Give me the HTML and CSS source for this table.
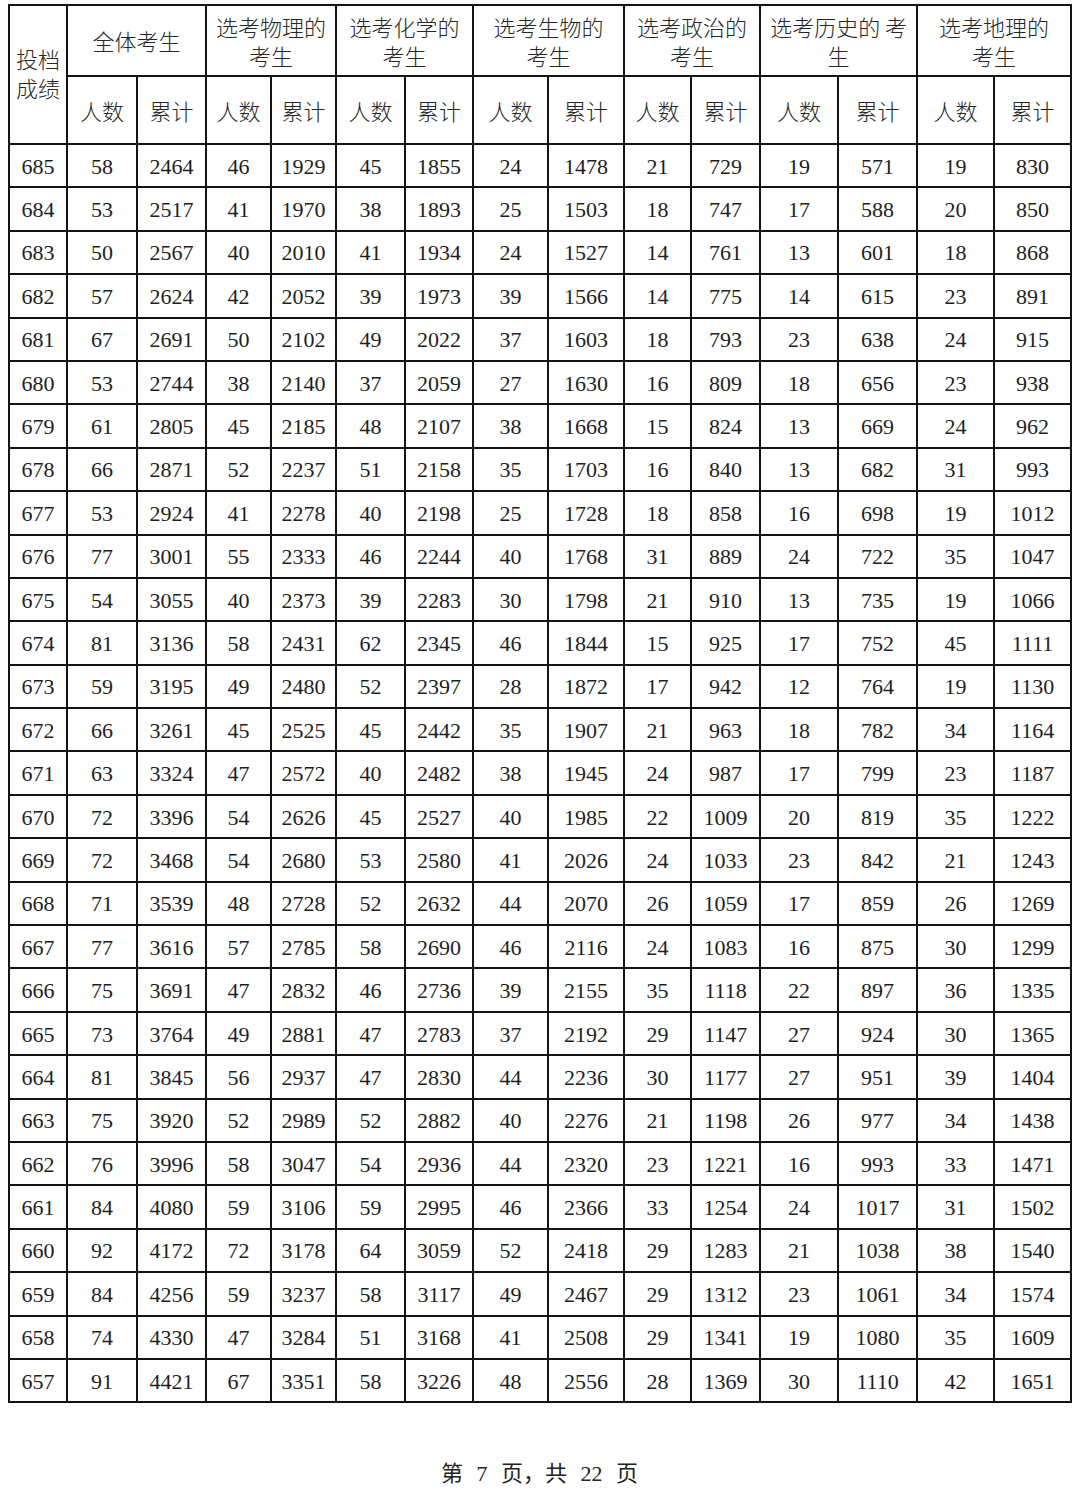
FILE: index.html
```html
<!DOCTYPE html>
<html lang="zh">
<head>
<meta charset="utf-8">
<link rel="stylesheet" href="styles.css">
</head>
<body>
<table class="grid">
<colgroup>
<col style="width:58px"><col style="width:70px"><col style="width:69px"><col style="width:65px"><col style="width:65px"><col style="width:69px"><col style="width:68px"><col style="width:75px"><col style="width:76px"><col style="width:67px"><col style="width:69px"><col style="width:78px"><col style="width:79px"><col style="width:77px"><col style="width:77px">
</colgroup>
<thead>
<tr class="h1">
<th rowspan="2" class="score">投档<br>成绩</th>
<th colspan="2">全体考生</th>
<th colspan="2">选考物理的<br>考生</th>
<th colspan="2">选考化学的<br>考生</th>
<th colspan="2">选考生物的<br>考生</th>
<th colspan="2">选考政治的<br>考生</th>
<th colspan="2">选考历史的 考<br>生</th>
<th colspan="2">选考地理的<br>考生</th>
</tr>
<tr class="h2">
<th>人数</th><th>累计</th><th>人数</th><th>累计</th><th>人数</th><th>累计</th><th>人数</th><th>累计</th><th>人数</th><th>累计</th><th>人数</th><th>累计</th><th>人数</th><th>累计</th>
</tr>
</thead>
<tbody id="rows">
<tr><td>685</td><td>58</td><td>2464</td><td>46</td><td>1929</td><td>45</td><td>1855</td><td>24</td><td>1478</td><td>21</td><td>729</td><td>19</td><td>571</td><td>19</td><td>830</td></tr>
<tr><td>684</td><td>53</td><td>2517</td><td>41</td><td>1970</td><td>38</td><td>1893</td><td>25</td><td>1503</td><td>18</td><td>747</td><td>17</td><td>588</td><td>20</td><td>850</td></tr>
<tr><td>683</td><td>50</td><td>2567</td><td>40</td><td>2010</td><td>41</td><td>1934</td><td>24</td><td>1527</td><td>14</td><td>761</td><td>13</td><td>601</td><td>18</td><td>868</td></tr>
<tr><td>682</td><td>57</td><td>2624</td><td>42</td><td>2052</td><td>39</td><td>1973</td><td>39</td><td>1566</td><td>14</td><td>775</td><td>14</td><td>615</td><td>23</td><td>891</td></tr>
<tr><td>681</td><td>67</td><td>2691</td><td>50</td><td>2102</td><td>49</td><td>2022</td><td>37</td><td>1603</td><td>18</td><td>793</td><td>23</td><td>638</td><td>24</td><td>915</td></tr>
<tr><td>680</td><td>53</td><td>2744</td><td>38</td><td>2140</td><td>37</td><td>2059</td><td>27</td><td>1630</td><td>16</td><td>809</td><td>18</td><td>656</td><td>23</td><td>938</td></tr>
<tr><td>679</td><td>61</td><td>2805</td><td>45</td><td>2185</td><td>48</td><td>2107</td><td>38</td><td>1668</td><td>15</td><td>824</td><td>13</td><td>669</td><td>24</td><td>962</td></tr>
<tr><td>678</td><td>66</td><td>2871</td><td>52</td><td>2237</td><td>51</td><td>2158</td><td>35</td><td>1703</td><td>16</td><td>840</td><td>13</td><td>682</td><td>31</td><td>993</td></tr>
<tr><td>677</td><td>53</td><td>2924</td><td>41</td><td>2278</td><td>40</td><td>2198</td><td>25</td><td>1728</td><td>18</td><td>858</td><td>16</td><td>698</td><td>19</td><td>1012</td></tr>
<tr><td>676</td><td>77</td><td>3001</td><td>55</td><td>2333</td><td>46</td><td>2244</td><td>40</td><td>1768</td><td>31</td><td>889</td><td>24</td><td>722</td><td>35</td><td>1047</td></tr>
<tr><td>675</td><td>54</td><td>3055</td><td>40</td><td>2373</td><td>39</td><td>2283</td><td>30</td><td>1798</td><td>21</td><td>910</td><td>13</td><td>735</td><td>19</td><td>1066</td></tr>
<tr><td>674</td><td>81</td><td>3136</td><td>58</td><td>2431</td><td>62</td><td>2345</td><td>46</td><td>1844</td><td>15</td><td>925</td><td>17</td><td>752</td><td>45</td><td>1111</td></tr>
<tr><td>673</td><td>59</td><td>3195</td><td>49</td><td>2480</td><td>52</td><td>2397</td><td>28</td><td>1872</td><td>17</td><td>942</td><td>12</td><td>764</td><td>19</td><td>1130</td></tr>
<tr><td>672</td><td>66</td><td>3261</td><td>45</td><td>2525</td><td>45</td><td>2442</td><td>35</td><td>1907</td><td>21</td><td>963</td><td>18</td><td>782</td><td>34</td><td>1164</td></tr>
<tr><td>671</td><td>63</td><td>3324</td><td>47</td><td>2572</td><td>40</td><td>2482</td><td>38</td><td>1945</td><td>24</td><td>987</td><td>17</td><td>799</td><td>23</td><td>1187</td></tr>
<tr><td>670</td><td>72</td><td>3396</td><td>54</td><td>2626</td><td>45</td><td>2527</td><td>40</td><td>1985</td><td>22</td><td>1009</td><td>20</td><td>819</td><td>35</td><td>1222</td></tr>
<tr><td>669</td><td>72</td><td>3468</td><td>54</td><td>2680</td><td>53</td><td>2580</td><td>41</td><td>2026</td><td>24</td><td>1033</td><td>23</td><td>842</td><td>21</td><td>1243</td></tr>
<tr><td>668</td><td>71</td><td>3539</td><td>48</td><td>2728</td><td>52</td><td>2632</td><td>44</td><td>2070</td><td>26</td><td>1059</td><td>17</td><td>859</td><td>26</td><td>1269</td></tr>
<tr><td>667</td><td>77</td><td>3616</td><td>57</td><td>2785</td><td>58</td><td>2690</td><td>46</td><td>2116</td><td>24</td><td>1083</td><td>16</td><td>875</td><td>30</td><td>1299</td></tr>
<tr><td>666</td><td>75</td><td>3691</td><td>47</td><td>2832</td><td>46</td><td>2736</td><td>39</td><td>2155</td><td>35</td><td>1118</td><td>22</td><td>897</td><td>36</td><td>1335</td></tr>
<tr><td>665</td><td>73</td><td>3764</td><td>49</td><td>2881</td><td>47</td><td>2783</td><td>37</td><td>2192</td><td>29</td><td>1147</td><td>27</td><td>924</td><td>30</td><td>1365</td></tr>
<tr><td>664</td><td>81</td><td>3845</td><td>56</td><td>2937</td><td>47</td><td>2830</td><td>44</td><td>2236</td><td>30</td><td>1177</td><td>27</td><td>951</td><td>39</td><td>1404</td></tr>
<tr><td>663</td><td>75</td><td>3920</td><td>52</td><td>2989</td><td>52</td><td>2882</td><td>40</td><td>2276</td><td>21</td><td>1198</td><td>26</td><td>977</td><td>34</td><td>1438</td></tr>
<tr><td>662</td><td>76</td><td>3996</td><td>58</td><td>3047</td><td>54</td><td>2936</td><td>44</td><td>2320</td><td>23</td><td>1221</td><td>16</td><td>993</td><td>33</td><td>1471</td></tr>
<tr><td>661</td><td>84</td><td>4080</td><td>59</td><td>3106</td><td>59</td><td>2995</td><td>46</td><td>2366</td><td>33</td><td>1254</td><td>24</td><td>1017</td><td>31</td><td>1502</td></tr>
<tr><td>660</td><td>92</td><td>4172</td><td>72</td><td>3178</td><td>64</td><td>3059</td><td>52</td><td>2418</td><td>29</td><td>1283</td><td>21</td><td>1038</td><td>38</td><td>1540</td></tr>
<tr><td>659</td><td>84</td><td>4256</td><td>59</td><td>3237</td><td>58</td><td>3117</td><td>49</td><td>2467</td><td>29</td><td>1312</td><td>23</td><td>1061</td><td>34</td><td>1574</td></tr>
<tr><td>658</td><td>74</td><td>4330</td><td>47</td><td>3284</td><td>51</td><td>3168</td><td>41</td><td>2508</td><td>29</td><td>1341</td><td>19</td><td>1080</td><td>35</td><td>1609</td></tr>
<tr><td>657</td><td>91</td><td>4421</td><td>67</td><td>3351</td><td>58</td><td>3226</td><td>48</td><td>2556</td><td>28</td><td>1369</td><td>30</td><td>1110</td><td>42</td><td>1651</td></tr>
</tbody>
</table>
<div class="footer">第 7 页，共 22 页</div>
</body>
</html>
```

FILE: styles.css
```css
html, body {
  margin: 0;
  padding: 0;
  background: #ffffff;
}
body {
  padding: 4px 0 0 8px;
  font-family: "Liberation Serif", "Noto Sans CJK SC", serif;
  color: #1e1e1e;
}
.grid {
  border-collapse: collapse;
  table-layout: fixed;
  width: 1063px;
  font-size: 22px;
}
.grid th, .grid td {
  border: 2px solid #141414;
  padding: 0;
  text-align: center;
  vertical-align: middle;
  font-weight: normal;
  overflow: hidden;
  white-space: nowrap;
}
.grid th {
  font-family: "Noto Sans CJK SC", sans-serif;
  font-weight: 300;
  line-height: 29px;
  color: #262626;
}
.grid .h1 { height: 71px; }
.grid .h2 { height: 68px; }
.grid .score { padding-bottom: 4px; }
.grid tbody tr { height: 43.4px; }
.grid td { line-height: 24px; padding-top: 2px; }
.footer {
  margin-top: 52px;
  width: 1063px;
  text-align: center;
  font-size: 22px;
  font-family: "Liberation Serif", "Noto Sans CJK SC", serif;
  word-spacing: 8px;
  color: #222;
}
```
